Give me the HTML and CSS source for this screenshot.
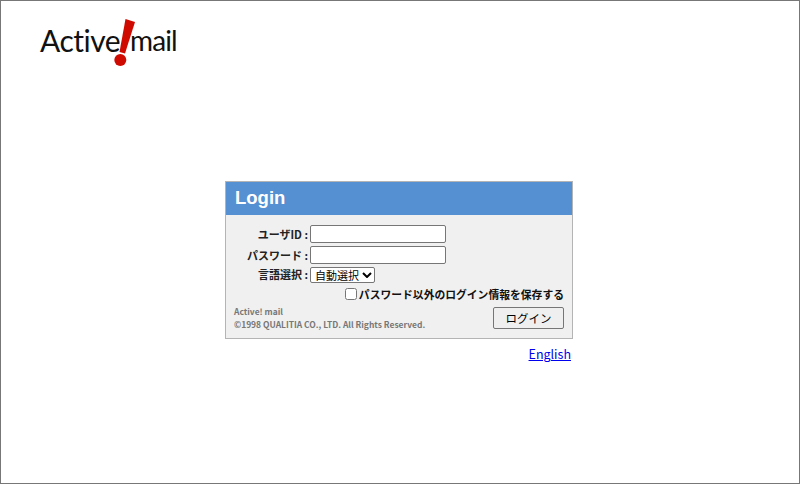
FILE: index.html
```html
<!DOCTYPE html>
<html lang="ja">
<head>
    <meta charset="UTF-8">
    <meta name="viewport" content="width=device-width, initial-scale=1.0">
    <title>Active! mail Login</title>
    <link rel="stylesheet" href="styles.css">
</head>
<body>
    <div class="page">
        <div class="logo">
            <span class="logo-word">Active</span>
            <svg class="logo-mark" width="22" height="48" viewBox="0 0 22 48">
                <path d="M11.5 0 L21 3 L11 34.5 L5.5 33 Z" fill="#cf0a00"/>
                <circle cx="6.3" cy="41" r="6" fill="#cf0a00"/>
            </svg>
            <span class="logo-word logo-word-mail">mail</span>
        </div>

        <div class="login-box">
            <h1 class="login-title">Login</h1>
            <form class="login-form">
                <div class="form-row">
                    <label class="form-label" for="userId">ユーザID :</label>
                    <input class="text-input" type="text" id="userId">
                </div>
                <div class="form-row">
                    <label class="form-label" for="password">パスワード :</label>
                    <input class="text-input" type="text" id="password">
                </div>
                <div class="form-row form-row-lang">
                    <label class="form-label" for="lang">言語選択 :</label>
                    <select class="lang-select" id="lang">
                        <option>自動選択</option>
                    </select>
                </div>
                <div class="save-row">
                    <input class="save-check" type="checkbox" id="save">
                    <label class="save-label" for="save">パスワード以外のログイン情報を保存する</label>
                </div>
                <div class="form-foot">
                    <div class="copyright">
                        <div>Active! mail</div>
                        <div>©1998 QUALITIA CO., LTD. All Rights Reserved.</div>
                    </div>
                    <button class="login-button" type="button">ログイン</button>
                </div>
            </form>
        </div>

        <div class="lang-link">
            <a href="#">English</a>
        </div>
    </div>
</body>
</html>
```

FILE: styles.css
```css
html, body {
    margin: 0;
    padding: 0;
}
body {
    font-family: "Noto Sans CJK JP", "Noto Sans", sans-serif;
    background: #fff;
}
.page {
    box-sizing: border-box;
    width: 800px;
    height: 484px;
    border: 1px solid #777;
    overflow: hidden;
}
.logo {
    display: flex;
    align-items: flex-end;
    height: 48px;
    margin: 18px 0 0 39px;
}
.logo-word {
    font-family: "Lato", "Liberation Sans", sans-serif;
    font-size: 30px;
    line-height: 38px;
    margin-bottom: 8px;
    letter-spacing: -0.5px;
    color: #111;
}
.logo-word-mail {
    font-size: 28px;
    letter-spacing: -0.9px;
}
.logo-mark {
    flex: none;
    margin-left: -6px;
    margin-right: -6px;
}
.login-box {
    box-sizing: border-box;
    width: 348px;
    height: 158px;
    margin: 114px 0 0 224px;
    border: 1px solid #b4b4b4;
    background: #f0f0f0;
}
.login-title {
    margin: 0;
    height: 33px;
    padding-left: 9px;
    background: #5590d2;
    color: #fff;
    font-family: "Liberation Sans", Arial, sans-serif;
    font-size: 18.5px;
    font-weight: bold;
    line-height: 32px;
}
.login-form {
    padding-top: 10px;
}
.form-row {
    display: flex;
    align-items: flex-start;
    height: 18px;
    margin-bottom: 3px;
}
.form-row-lang {
    height: 16px;
}
.form-label {
    width: 82px;
    margin-right: 2px;
    text-align: right;
    font-size: 11px;
    font-weight: bold;
    line-height: 18px;
    color: #222;
    white-space: nowrap;
}
.form-row-lang .form-label {
    line-height: 15px;
}
.text-input {
    box-sizing: border-box;
    width: 136px;
    height: 18px;
    margin: 0;
    padding: 1px 2px;
    border: 1px solid #767676;
    border-radius: 2px;
    background: #fff;
}
.lang-select {
    appearance: none;
    box-sizing: border-box;
    width: 65px;
    height: 16px;
    margin: 0;
    padding: 0 0 0 4px;
    font-family: "Noto Sans CJK JP", sans-serif;
    font-size: 11px;
    line-height: 14px;
    border: 1px solid #767676;
    border-radius: 2px;
    background: #fff url("data:image/svg+xml,%3Csvg xmlns='http://www.w3.org/2000/svg' width='10' height='6'%3E%3Cpath d='M1 1l4 4 4-4' fill='none' stroke='%23000' stroke-width='2'/%3E%3C/svg%3E") no-repeat right 2px center;
    color: #000;
}
.save-row {
    display: flex;
    justify-content: flex-end;
    align-items: center;
    height: 16px;
    padding-right: 8px;
}
.save-check {
    width: 12px;
    height: 12px;
    margin: 0 2px 0 0;
}
.save-label {
    font-size: 10.8px;
    font-weight: bold;
    color: #111;
    white-space: nowrap;
}
.form-foot {
    display: flex;
    justify-content: space-between;
    align-items: flex-start;
    padding: 2px 8px 0;
}
.copyright {
    font-size: 8.45px;
    font-weight: bold;
    line-height: 13px;
    color: #777;
    padding-top: 1px;
}
.login-button {
    box-sizing: border-box;
    width: 71px;
    height: 22px;
    margin: 3px 0 0;
    padding: 0;
    border: 1px solid #767676;
    border-radius: 2px;
    background: #efefef;
    font-family: "Noto Sans CJK JP", sans-serif;
    font-size: 11.5px;
    color: #000;
}
.lang-link {
    width: 345px;
    margin: 6px 0 0 225px;
    text-align: right;
    font-size: 12.5px;
    line-height: 18px;
}
.lang-link a {
    color: #0000ee;
}
```
